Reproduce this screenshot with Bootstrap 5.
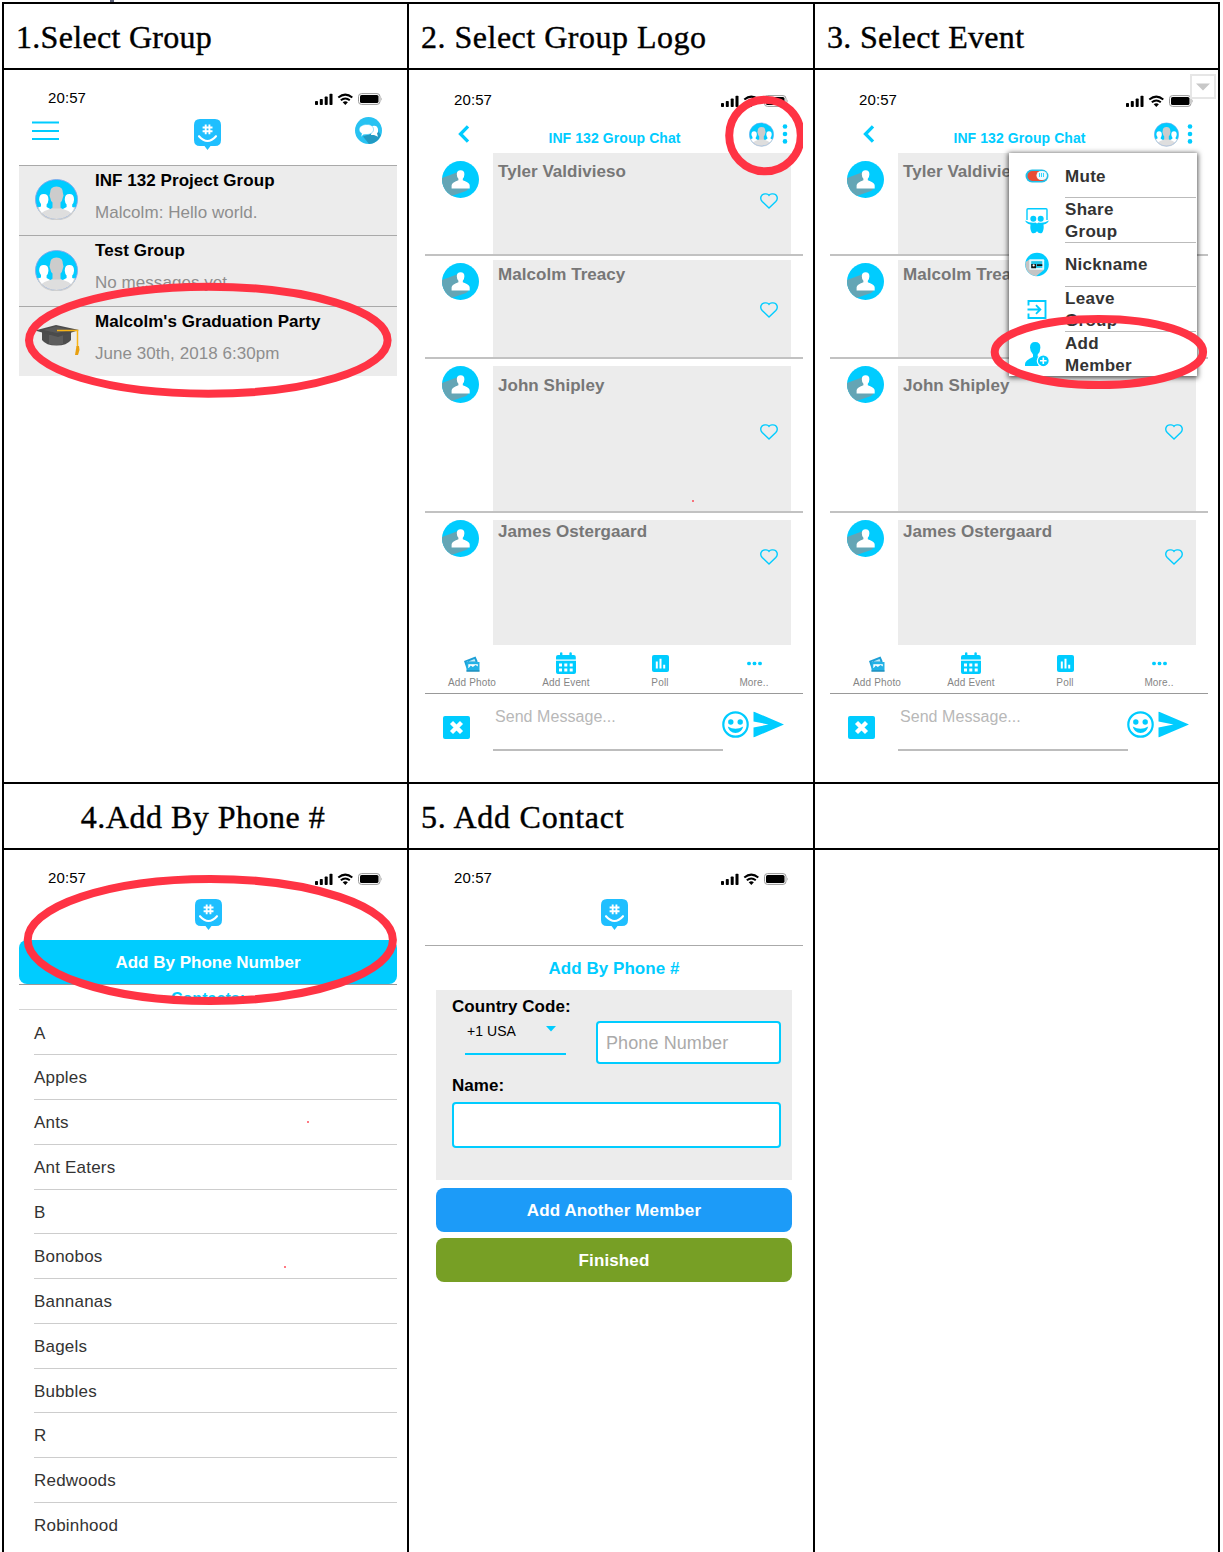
<!DOCTYPE html>
<html lang="en">
<head>
<meta charset="utf-8">
<title>Add a member walkthrough</title>
<link href="https://cdn.jsdelivr.net/npm/bootstrap@5.3.0/dist/css/bootstrap.min.css" rel="stylesheet">
<style>
:root{--cy:#00ccff}
body{background:#fff;color:#000;font-family:"Liberation Sans",Arial,sans-serif;font-size:17px;line-height:22px;overflow:hidden;height:1552px;letter-spacing:.05px}
svg{display:block;flex:none;overflow:visible}
.sheet{width:1218px;margin-left:2px;position:relative}
.cut{height:2px;padding-left:110px}
.cut i{display:block;width:4px;height:2px;background:#5a5f78}
.line-row{border-top:2px solid #000}
.cellx{border-left:2px solid #000;width:406px;flex:none}
.cellx:first-child{width:405px}
.cellx:last-child{width:407px;border-right:2px solid #000}
.heads{height:66px}
.heads .cellx{font:32px/64px "Liberation Serif",serif;letter-spacing:.5px;padding:1px 11px 0 12px;-webkit-text-stroke:.4px #000;white-space:nowrap}
.heads .tight{letter-spacing:.3px}
.heads .wide{letter-spacing:.75px}
.heads .mid{padding:1px 14px 0 9px}
.shots{height:714px}
.cellx .phone{width:378px;margin-left:15px;position:relative}
.cellx:nth-child(2) .phone{margin-left:16px}
.stat{height:48px;padding:17px 14px 0 29px;font-size:15px}
.stat .clock{letter-spacing:.1px}
.stat svg{margin-top:6px}
.chat .stat{padding-top:19px;height:49px}
.ring{position:absolute;left:0;top:0;z-index:5;fill:none;stroke:#ff3344;stroke-width:8}
.cy{color:var(--cy)}
.home{height:47px;padding:0 15px 0 13px}
.thread{background:#ececec;border-top:1px solid #a9a9a9;height:70px;padding:4px 0 0 16px}
.thread:nth-of-type(2){height:71px}
.thread .pic{width:43px;margin:9px 17px 0 0}
.thread p{margin:10px 0 0;color:#8e8e8e}
.chathead{height:34px;padding:0 15px 0 33px}
.chathead .ttl{font-size:14px;font-weight:700;letter-spacing:.08px;line-height:20px;padding:9px 0 0 10px}
.chathead .arrow{margin-top:6px}
.chathead .mates{margin-top:3px}
.chathead .more{margin-top:5px}
.msg{height:103px;border-bottom:2px solid #c2c2c2;padding:0 12px 0 17px}
.msg .face{width:51px;padding-top:7px}
.bubble{background:#ececec;flex:1;padding:4px 13px 0 5px;margin-top:4px;color:#777;font-weight:700}
.bubble svg{margin-top:37px}
.m1 .face{padding-top:8px}
.m1 .bubble{margin-top:0;padding-top:8px}.m1 .bubble svg{margin-top:32px}
.m2 .bubble svg{margin-top:38px}
.m3{height:154px}.m3 .bubble{margin-top:7px;padding-top:9px}.m3 .bubble svg{margin-top:49px}
.m4{height:132px;border:0}.m4 .bubble{margin-top:7px;padding-top:1px}.m4 .bubble svg{margin-top:28px}
.tools{height:49px;border-bottom:1px solid #999}
.tools>div{width:94px;font-size:10px;color:#858585;text-align:center;line-height:12px;letter-spacing:.15px}
.tools svg{margin:7px auto 3px}
.send{padding:12px 19px 0 18px}
.send .closer{margin-top:10px}
.send .field{width:230px;height:45px;margin-left:23px;border-bottom:2px solid #bdbdbd;color:#b8b8b8;font-size:16px;padding:1px 2px;line-height:20px}
.pop{position:absolute;left:179px;top:83px;width:188px;height:223px;background:#fff;box-shadow:0 1px 5px 1px rgba(0,0,0,.65);z-index:2;font-weight:700;color:#333;padding:1px 0 0 16px;letter-spacing:.3px}
.pop .ico{width:24px;margin-right:16px}
.pop .txt{width:131px;height:44.4px;border-bottom:1px solid #bbb;padding:2px 40px 0 0}
.pop .opt:last-child .txt{border:0}
.handle{position:absolute;right:4px;top:72px;width:26px;height:25px;border:2px solid #e6e6e6;background:#fff;z-index:4}
.big{border-radius:8px;height:44px;color:#fff;font-weight:700;font-size:17px;width:100%;line-height:46px;letter-spacing:.12px;text-align:center}
.dial{background:var(--cy);letter-spacing:0}
.again{background:#1c9bf8;margin-top:8px}
.done{background:#779f25;margin-top:6px}
.lbl{height:26px;border-top:1px solid #999;border-bottom:1px solid #d4d4d4;font-size:16px;font-weight:700;line-height:27px}
.names{margin-left:15px;color:#333;letter-spacing:.2px;padding-top:.5px}
.names div{height:44.75px;line-height:45px;border-bottom:1px solid #cdcdcd}
.speck{position:absolute;width:2px;height:2px;border-radius:1px;background:#f23;opacity:.8}
.byphone{border-top:1px solid #aaa;padding-top:12px}
.panel5{background:#ececec;margin:10px 11px 0;height:190px;padding:6px 11px 0 16px;font-weight:700}
.panel5 .who{margin-top:11px}
.acts{width:356px}
.code{width:101px;height:37px;margin-left:13px;border-bottom:2px solid var(--cy);font-weight:400;font-size:14px;padding-left:2px;line-height:26px}
.code svg{margin:8px 0 0 30px}
.box{border:2px solid var(--cy);border-radius:4px;background:#fff;font-weight:400;color:#aaa}
.tel{width:185px;height:43px;padding-left:8px;line-height:41px;margin-top:25px;font-size:18px;letter-spacing:.1px}
.nm{height:46px;margin-top:5px}
</style>
<script src="https://cdn.jsdelivr.net/npm/bootstrap@5.3.0/dist/js/bootstrap.bundle.min.js"></script>
</head>
<body>
<svg width="0" height="0" class="position-absolute">
<defs>
<symbol id="bars" viewBox="0 0 68 12">
 <rect x="0" y="8" width="3" height="4" rx=".8"/><rect x="4.8" y="6" width="3" height="6" rx=".8"/><rect x="9.7" y="3.4" width="3" height="8.6" rx=".8"/><rect x="14.5" y=".8" width="3" height="11.2" rx=".8"/>
 <g fill="none" stroke="#000" stroke-width="2"><path d="M23.3 4.600q7-6 14 0"/><path d="M25.800 7.300q4.500-3.600 9 0"/></g><path d="M27.700 9.300q2.600-2 5.200 0l-2.600 2.700z"/>
 <rect x="43.500" y=".6" width="21.500" height="10.800" rx="3" fill="none" stroke="#999"/><rect x="45" y="2" width="18.500" height="8" rx="1.600"/><path d="M66.300 4.200q1.400 1.800 0 3.600z" fill="#999"/>
</symbol>
<symbol id="logo" viewBox="0 0 27 31"><path fill="#1fbfff" d="M6 0h15q6 0 6 6v15q0 6-6 6h-4.500l-3 4-3-4H6q-6 0-6-6V6q0-6 6-6z"/><g fill="none" stroke="#fff"><path stroke-width="1.900" d="M11.700 5.500v9.800M15.400 5.500v9.800M8.600 8.500h9.900M8.600 12.200h9.900"/><path stroke-width="2.100" stroke-linecap="round" d="M5 17.200q8.500 9.600 17 0"/></g></symbol>
<clipPath id="disc"><ellipse cx="21.500" cy="20.500" rx="21" ry="20"/></clipPath>
<symbol id="trio" viewBox="0 0 43 41">
 <g clip-path="url(#disc)"><rect width="43" height="41" fill="#00ccff"/>
 <path fill="#fff" d="M4.200 21q-.4-6 4.600-6t4.600 6q-.2 3-1.800 4.500v2.500l4.500 2.500v12H0V29.500l6-2v-2.500q-1.400-1.500-1.800-4zM29.800 21q-.4-6 4.600-6t4.600 6q-.2 3-1.800 4.500v2.500l5.400 1.500v12H27V30.500l4.600-2.500v-2.500q-1.600-1.500-1.800-4.500z"/>
 <path fill="#ccc" d="M15 14.500q-.2-7 6.500-7t6.500 7q1.200 1.500-.3 4.500-.4 3-2.200 4.500v5q1 1.500 3.500 2.500H14q2.500-1 3.500-2.500v-5q-1.800-1.500-2.200-4.500-1.500-3-.3-4.500z"/>
 <path fill="#dedede" d="M16.500 29.500h10q6 1.500 10 5v8H6v-8q4.500-3.500 10.500-5z"/></g>
 <ellipse cx="21.500" cy="20.500" rx="21" ry="20" fill="none" stroke="#7fa8ec" stroke-width=".9"/>
 <path d="M3 28q3.500 12.500 18.500 12.500T40 28" fill="none" stroke="#cfcfcf" stroke-width="1.100"/>
</symbol>
<clipPath id="disc2"><circle cx="18.500" cy="18.500" r="18.500"/></clipPath>
<symbol id="person" viewBox="0 0 37 37"><g clip-path="url(#disc2)"><rect width="37" height="37" fill="#00ccff"/><path fill="#64a5b5" d="M0 17 16 11l10.500 17L24 30 9.500 35 4 37H0z"/><path fill="#fff" d="M14.800 13.200q0-3.900 3.800-3.900t3.800 3.900q0 2.800-1.600 4.600v1.500q6.900 2.400 6.900 5.200v3H9.600v-3q0-2.800 6.800-5.200v-1.500q-1.600-1.800-1.600-4.600z"/></g></symbol>
<symbol id="heart" viewBox="0 0 18 16"><path fill="none" stroke="#00ccff" stroke-width="1.400" d="M9 15 2.200 8.500C-.6 5.400 1 .9 5 .9h1q2 .2 3 1.400Q10 1.100 12 .9h1c4 0 5.600 4.500 2.800 7.600z"/></symbol>
<symbol id="kebab" viewBox="0 0 6 20"><g fill="#00ccff"><circle cx="3" cy="2.500" r="2.300"/><circle cx="3" cy="10" r="2.300"/><circle cx="3" cy="17.400" r="2.300"/></g></symbol>
<symbol id="back" viewBox="0 0 12 18"><path d="M10 1.300 2.500 9l7.500 7.700" fill="none" stroke="#00ccff" stroke-width="3.300"/></symbol>
<symbol id="photo" viewBox="0 0 16 16"><path fill="#1d9fd6" d="M0 5 11.500.5 13.500 5v3H4L3 13 2 11z"/><path d="M2.500 6.300 10.500 3l1 2.500H3z" fill="#c5edfa"/><path fill="#23b2e6" d="M2.500 6h13v9.500h-13z"/><path fill="#1a7ca8" d="M2.500 14.500h13v1h-13z"/><path fill="#fff" d="M4.300 8.200h9.500V12H4.300z"/><path fill="#23b2e6" d="m4.300 12.500 2.500-3 2 1.500 2.700-2 2.500 1.500v2z"/></symbol>
<symbol id="cal" viewBox="0 0 20 22"><path fill="#00ccff" d="M2 3h2V.8q1.200-1.300 2.400 0V3h7V.8q1.200-1.300 2.400 0V3h2q2 0 2 2v2.500H0V5q0-2 2-2zM0 8.800h20V20q0 2-2 2H2q-2 0-2-2z"/><path fill="#fff" d="M3 11.500h3v3H3zM8.300 11.500h3v3h-3zM13.700 11.500h3v3h-3zM3 16.500h3v3H3zM8.300 16.500h3v3h-3zM13.700 16.500h3v3h-3z"/></symbol>
<symbol id="poll" viewBox="0 0 17 17"><rect width="17" height="17" rx="2" fill="#00ccff"/><path stroke="#fff" stroke-width="2" d="M4.800 6.500v7M8.500 3.700v9.800M12.200 9.800v3.700"/></symbol>
<symbol id="dots" viewBox="0 0 15 4"><g fill="#00ccff"><circle cx="2" cy="2" r="1.900"/><circle cx="7.500" cy="2" r="1.900"/><circle cx="13" cy="2" r="1.900"/></g></symbol>
<symbol id="cross" viewBox="0 0 27 23"><rect width="27" height="23" rx="2" fill="#00ccff"/><path d="m8.500 6.500 10 10m0-10-10 10" stroke="#fff" stroke-width="4.300"/></symbol>
<symbol id="smile" viewBox="0 0 27 27"><circle cx="13.500" cy="13.500" r="12.200" fill="none" stroke="#00ccff" stroke-width="2.200"/><g fill="#00ccff"><circle cx="8.800" cy="11" r="2.700"/><circle cx="18.200" cy="11" r="2.700"/><path d="M5.800 15.500q7.700 4.500 15.400 0-1.500 6.500-7.700 6.500t-7.700-6.500z"/></g></symbol>
<symbol id="plane" viewBox="0 0 31 26"><path fill="#00ccff" d="M.5 0 31 13 .5 26V16l15-3-15-3z"/></symbol>
</defs>
</svg>

<div class="cut"><i></i></div>
<main class="sheet">
 <div class="d-flex line-row heads">
  <div class="cellx tight">1.Select Group</div><div class="cellx">2. Select Group Logo</div><div class="cellx tight">3. Select Event</div>
 </div>
 <div class="d-flex line-row shots">
  <section class="cellx"><div class="phone">
   <div class="stat d-flex justify-content-between"><span class="clock">20:57</span><svg width="68" height="12"><use href="#bars"/></svg></div>
   <header class="home d-flex justify-content-between align-items-start">
    <svg width="27" height="24"><path d="M0 4.500h27M0 13h27M0 21h27" stroke="#00ccff" stroke-width="2.100"/></svg>
    <svg width="27" height="31"><use href="#logo" y="1"/></svg>
    <svg width="27" height="27"><g transform="translate(0 -1)"><circle cx="13.500" cy="13.500" r="13.500" fill="#27c2f2"/><path fill="#2199c2" d="M8 19.500 23 14l2.800 4A13.500 13.500 0 0 1 14 27z"/><path fill="#fff" d="M17 9q5-1.500 6 3 .5 3-1 4.500l1 3.200-4-1.700H16z"/><path fill="#fff" stroke="#27c2f2" stroke-width=".5" d="M12 7.500c4 0 6.500 2 6.500 5s-3 5-7 5l-3 .2-2.600 2.300.8-3.600c-1.500-.8-2.500-2.200-2.500-3.900 0-3 3.500-5 7.800-5z"/></g></svg>
   </header>
   <article class="thread d-flex"><div class="pic"><svg width="43" height="41"><use href="#trio"/></svg></div><div><b>INF 132 Project Group</b><p>Malcolm: Hello world.</p></div></article>
   <article class="thread d-flex"><div class="pic"><svg width="43" height="41"><use href="#trio" y="1"/></svg></div><div><b>Test Group</b><p>No messages yet.</p></div></article>
   <article class="thread d-flex"><div class="pic"><svg width="44" height="34" viewBox="0 0 44 34">
     <path fill="#4d4d4d" d="M7 11h29v9q-4 5.500-14.500 5.500T7 20z"/><path fill="#707070" d="M14 15h14v9q-7 2-14 0z" opacity=".5"/><path fill="#4b4b4b" d="M0 10.500 21 5l23 5-21 7z"/><path fill="#626262" d="M8 10 21 6.500 36 10l-14 3z" opacity=".6"/><path d="M22 10.500h20.500v17" fill="none" stroke="#f9b517" stroke-width="1.500"/><path fill="#e8a010" d="M41.500 26h2.500l.5 4-1.500 5h-3z"/></svg></div><div><b>Malcolm's Graduation Party</b><p>June 30th, 2018 6:30pm</p></div></article>
   <svg class="ring" width="378" height="340"><ellipse cx="189.300" cy="270.200" rx="179.300" ry="53.500"/></svg>
  </div></section>

  <section class="cellx"><div class="phone chat">
   <div class="stat d-flex justify-content-between"><span class="clock">20:57</span><svg width="68" height="12"><use href="#bars"/></svg></div>
   <header class="chathead d-flex justify-content-between align-items-start"><svg width="12" height="18" class="arrow"><use href="#back"/></svg><span class="ttl cy ms-auto">INF 132 Group Chat</span><svg width="25" height="25" class="mates ms-auto"><use href="#trio"/></svg><svg width="6" height="20" class="more ms-2"><use href="#kebab"/></svg></header>
   <div class="msg m1 d-flex"><div class="face"><svg width="37" height="37"><use href="#person"/></svg></div><div class="bubble d-flex justify-content-between">Tyler Valdivieso<svg width="18" height="16"><use href="#heart"/></svg></div></div>
   <div class="msg m2 d-flex"><div class="face"><svg width="37" height="37"><use href="#person"/></svg></div><div class="bubble d-flex justify-content-between">Malcolm Treacy<svg width="18" height="16"><use href="#heart"/></svg></div></div>
   <div class="msg m3 d-flex"><div class="face"><svg width="37" height="37"><use href="#person"/></svg></div><div class="bubble d-flex justify-content-between">John Shipley<svg width="18" height="16"><use href="#heart"/></svg></div></div>
   <div class="msg m4 d-flex"><div class="face"><svg width="37" height="37"><use href="#person"/></svg></div><div class="bubble d-flex justify-content-between">James Ostergaard<svg width="18" height="16"><use href="#heart"/></svg></div></div>
   <div class="tools d-flex"><div><svg width="16" height="22"><use href="#photo" width="16" height="16" y="4"/></svg>Add Photo</div><div><svg width="20" height="22"><use href="#cal"/></svg>Add Event</div><div><svg width="17" height="22"><use href="#poll" width="17" height="17" y="3"/></svg>Poll</div><div><svg width="15" height="22"><use href="#dots" width="15" height="4" y="9.500"/></svg>More..</div></div>
   <div class="send d-flex"><svg width="27" height="23" class="closer"><use href="#cross"/></svg><div class="field">Send Message...</div><svg width="26" height="27" class="mt-1"><use href="#smile" y="1" x="-1" width="27" height="27"/></svg><svg width="31" height="26" class="ms-auto mt-1"><use href="#plane" y="1.500"/></svg></div>
   <svg class="ring overflow-hidden" width="378" height="340"><circle cx="340" cy="65.500" r="35.800"/></svg>
   <i class="speck" style="left:267px;top:430px"></i>
  </div></section>

  <section class="cellx"><div class="phone chat">
   <div class="stat d-flex justify-content-between"><span class="clock">20:57</span><svg width="68" height="12"><use href="#bars"/></svg></div>
   <header class="chathead d-flex justify-content-between align-items-start"><svg width="12" height="18" class="arrow"><use href="#back"/></svg><span class="ttl cy ms-auto">INF 132 Group Chat</span><svg width="25" height="25" class="mates ms-auto"><use href="#trio"/></svg><svg width="6" height="20" class="more ms-2"><use href="#kebab"/></svg></header>
   <div class="msg m1 d-flex"><div class="face"><svg width="37" height="37"><use href="#person"/></svg></div><div class="bubble">Tyler Valdivie</div></div>
   <div class="msg m2 d-flex"><div class="face"><svg width="37" height="37"><use href="#person"/></svg></div><div class="bubble">Malcolm Trea</div></div>
   <div class="msg m3 d-flex"><div class="face"><svg width="37" height="37"><use href="#person"/></svg></div><div class="bubble d-flex justify-content-between">John Shipley<svg width="18" height="16"><use href="#heart"/></svg></div></div>
   <div class="msg m4 d-flex"><div class="face"><svg width="37" height="37"><use href="#person"/></svg></div><div class="bubble d-flex justify-content-between">James Ostergaard<svg width="18" height="16"><use href="#heart"/></svg></div></div>
   <div class="tools d-flex"><div><svg width="16" height="22"><use href="#photo" width="16" height="16" y="4"/></svg>Add Photo</div><div><svg width="20" height="22"><use href="#cal"/></svg>Add Event</div><div><svg width="17" height="22"><use href="#poll" width="17" height="17" y="3"/></svg>Poll</div><div><svg width="15" height="22"><use href="#dots" width="15" height="4" y="9.500"/></svg>More..</div></div>
   <div class="send d-flex"><svg width="27" height="23" class="closer"><use href="#cross"/></svg><div class="field">Send Message...</div><svg width="26" height="27" class="mt-1"><use href="#smile" y="1" x="-1" width="27" height="27"/></svg><svg width="31" height="26" class="ms-auto mt-1"><use href="#plane" y="1.500"/></svg></div>
   <div class="pop">
    <div class="opt d-flex align-items-center"><svg class="ico" height="14" viewBox="0 0 24 14"><rect x=".5" y=".5" width="23" height="13" rx="6.500" fill="#20bfe8"/><rect x="2.500" y="2" width="19" height="10" rx="5" fill="#e94b35"/><rect x="11.500" y="2" width="10.500" height="9" rx="4.500" fill="#eefaff"/><path d="M14.500 4v4M16.500 4v4M18.500 4v4" stroke="#00ccff" stroke-width=".8"/></svg><div class="txt d-flex align-items-center">Mute</div></div>
    <div class="opt d-flex align-items-center"><svg class="ico" height="26" viewBox="0 0 24 26"><path d="M2 12V1.700q0-.9 1-.9h18q1 0 1 .9V12" fill="none" stroke="#00ccff" stroke-width="1.400"/><g fill="#00ccff"><circle cx="8.300" cy="10.700" r="3"/><circle cx="15.700" cy="10.700" r="3"/><path d="M.2 12.500q5 3 10.300 2l1.500 1 1.500-1q5.300 1 10.300-2-.8 3-5.300 4 .8 5.500-1.500 8.500-3.500 1-4.700-1.500h-.6Q10.500 26 7 25q-2.300-3-1.500-8.500-4.500-1-5.300-4z"/></g></svg><div class="txt d-flex align-items-center">Share Group</div></div>
    <div class="opt d-flex align-items-center"><svg class="ico" height="25" viewBox="0 0 25 25"><circle cx="12.500" cy="12.500" r="12.300" fill="#00ccff"/><path fill="#c4c4c4" d="M.5 10 5 7l15 11-8.500 6.700Q2 23 .5 14z"/><rect x="4.500" y="7" width="15.500" height="11" rx="1" fill="#e2f7fd"/><rect x="6.500" y="9" width="11.500" height="7" fill="#23c5e8"/><path fill="#111" d="M6.500 12h5v4.500h-5zM12.500 12.300h5.500V14h-5.500z"/><circle cx="9" cy="13.500" r="1.200" fill="#fff"/></svg><div class="txt d-flex align-items-center">Nickname</div></div>
    <div class="opt d-flex align-items-center"><svg class="ico" height="19" viewBox="0 0 24 19"><path d="M3.500 5.500V1h17v17h-17v-4.500" fill="none" stroke="#00ccff" stroke-width="1.900"/><path d="M2.500 9.500H15M11 5.200l4.300 4.300-4.300 4.300" fill="none" stroke="#00ccff" stroke-width="1.900"/></svg><div class="txt d-flex align-items-center">Leave Group</div></div>
    <div class="opt d-flex align-items-center"><svg class="ico" height="26" viewBox="0 0 24 26"><path fill="#00ccff" d="M5 6.500Q5 1 10.200 1t5.200 5.500q0 4.500-2.700 7v2l3 1.500-2 8H0v-2q0-3.500 8-7v-2.500q-3-3-3-7z"/><circle cx="18.300" cy="19.800" r="6" fill="#00ccff" stroke="#fff" stroke-width="1.200"/><path d="M18.300 16.500v6.600M15 19.800h6.600" stroke="#fff" stroke-width="1.600"/></svg><div class="txt d-flex align-items-center">Add Member</div></div>
   </div>
   <svg class="ring" width="378" height="340"><ellipse cx="268.900" cy="282" rx="104.200" ry="33"/></svg>
  </div></section>
 </div>

 <div class="d-flex line-row heads">
  <div class="cellx text-center mid">4.Add By Phone #</div><div class="cellx wide">5. Add Contact</div><div class="cellx"></div>
 </div>
 <div class="d-flex line-row shots">
  <section class="cellx"><div class="phone">
   <div class="stat d-flex justify-content-between"><span class="clock">20:57</span><svg width="68" height="12"><use href="#bars"/></svg></div>
   <svg class="mx-auto" width="27" height="42"><use href="#logo" width="27" height="31" y="1"/></svg>
   <div class="big dial">Add By Phone Number</div>
   <div class="lbl cy text-center">Contacts:</div>
   <div class="names"><div>A</div><div>Apples</div><div>Ants</div><div>Ant Eaters</div><div>B</div><div>Bonobos</div><div>Bannanas</div><div>Bagels</div><div>Bubbles</div><div>R</div><div>Redwoods</div><div class="border-0">Robinhood</div></div>
   <svg class="ring" width="378" height="340"><ellipse cx="191.300" cy="90" rx="182.600" ry="61"/></svg>
   <i class="speck" style="left:288px;top:271px"></i><i class="speck" style="left:265px;top:416px"></i>
  </div></section>
  <section class="cellx"><div class="phone">
   <div class="stat d-flex justify-content-between"><span class="clock">20:57</span><svg width="68" height="12"><use href="#bars"/></svg></div>
   <svg class="mx-auto" width="27" height="47"><use href="#logo" width="27" height="31" y="1"/></svg>
   <div class="byphone text-center cy fw-bold">Add By Phone #</div>
   <form class="panel5">
    <div class="d-flex justify-content-between align-items-start"><div><label class="d-block">Country Code:</label><div class="code d-flex">+1 USA<svg width="10" height="6"><path d="M0 0h10L5 5.500z" fill="#00ccff"/></svg></div></div><div class="box tel">Phone Number</div></div>
    <label class="d-block who">Name:</label>
    <div class="box nm"></div>
   </form>
   <div class="mx-auto acts"><div class="big again">Add Another Member</div><div class="big done">Finished</div></div>
  </div></section>
  <section class="cellx"></section>
 </div>
 <div class="handle"><svg width="22" height="21"><path d="M4 7.500h14l-7 7z" fill="#c8c8c8"/></svg></div>
</main>
</body>
</html>
